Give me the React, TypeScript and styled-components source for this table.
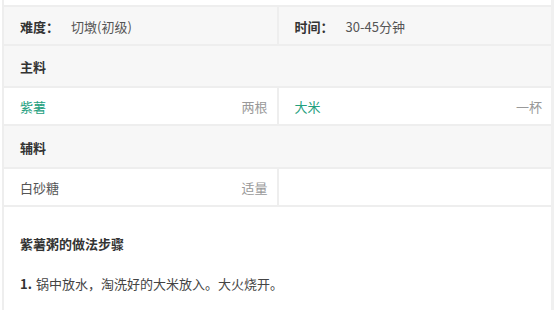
import React from 'react';
import styled, { createGlobalStyle } from 'styled-components';

const GlobalStyle = createGlobalStyle`
    html, body {
        margin: 0;
        padding: 0;
        background: #fff;
    }
    body {
        font-family: "Noto Sans CJK SC", "Microsoft YaHei", sans-serif;
        font-size: 13px;
        color: #333;
    }
`;

// 外层容器
const Page = styled.div`
    box-sizing: border-box;
    width: 552px;
    height: 310px;
    margin-left: 2px;
    padding-top: 5px;
    border-left: 2px solid #eeeeee;
    border-right: 3px solid #f0f0f0;
    overflow: hidden;
`;

// 食材表格
const Table = styled.div`
    display: grid;
    grid-template-columns: 1fr 1fr;
    gap: 2px;
    background: #eeeeee;
    border-top: 2px solid #eeeeee;
    border-bottom: 2px solid #eeeeee;
`;

const Cell = styled.div<{ $head?: boolean; $wide?: boolean; $h: number }>`
    display: flex;
    align-items: center;
    justify-content: space-between;
    height: ${(p) => p.$h}px;
    padding: 1px 9px 0 16px;
    background: ${(p) => (p.$head ? '#f7f7f7' : '#fff')};
    grid-column: ${(p) => (p.$wide ? '1 / span 2' : 'auto')};
    box-sizing: border-box;
`;

const Info = styled.div`
    display: flex;
    align-items: center;
`;

const Label = styled.span`
    font-weight: bold;
    color: #333;
    margin-right: 12px;
`;

const Value = styled.span`
    color: #555;
`;

const Title = styled.span`
    font-weight: bold;
    color: #333;
`;

const Name = styled.span<{ $link?: boolean }>`
    color: ${(p) => (p.$link ? '#23a07e' : '#555')};
`;

const Amount = styled.span`
    color: #999;
`;

// 做法步骤
const Steps = styled.div`
    padding: 0 16px;
`;

const StepsTitle = styled.h3`
    margin: 27px 0 0;
    font-size: 13px;
    line-height: 20px;
    font-weight: bold;
    color: #333;
`;

const Step = styled.p`
    margin: 20px 0 0;
    font-size: 13px;
    line-height: 20px;
    color: #444;

    strong {
        color: #333;
        margin-right: 4px;
    }
`;

const App: React.FC = () => {
    return (
        <>
            <GlobalStyle />
            <Page>
                <Table>
                    <Cell $head $h={37}>
                        <Info>
                            <Label>难度：</Label>
                            <Value>切墩(初级)</Value>
                        </Info>
                    </Cell>
                    <Cell $head $h={37}>
                        <Info>
                            <Label>时间：</Label>
                            <Value>30-45分钟</Value>
                        </Info>
                    </Cell>

                    <Cell $head $wide $h={40}>
                        <Title>主料</Title>
                    </Cell>
                    <Cell $h={36}>
                        <Name $link>紫薯</Name>
                        <Amount>两根</Amount>
                    </Cell>
                    <Cell $h={36}>
                        <Name $link>大米</Name>
                        <Amount>一杯</Amount>
                    </Cell>

                    <Cell $head $wide $h={41}>
                        <Title>辅料</Title>
                    </Cell>
                    <Cell $h={36}>
                        <Name>白砂糖</Name>
                        <Amount>适量</Amount>
                    </Cell>
                    <Cell $h={36} />
                </Table>

                <Steps>
                    <StepsTitle>紫薯粥的做法步骤</StepsTitle>
                    <Step>
                        <strong>1.</strong>锅中放水，淘洗好的大米放入。大火烧开。
                    </Step>
                </Steps>
            </Page>
        </>
    );
};

export default App;
